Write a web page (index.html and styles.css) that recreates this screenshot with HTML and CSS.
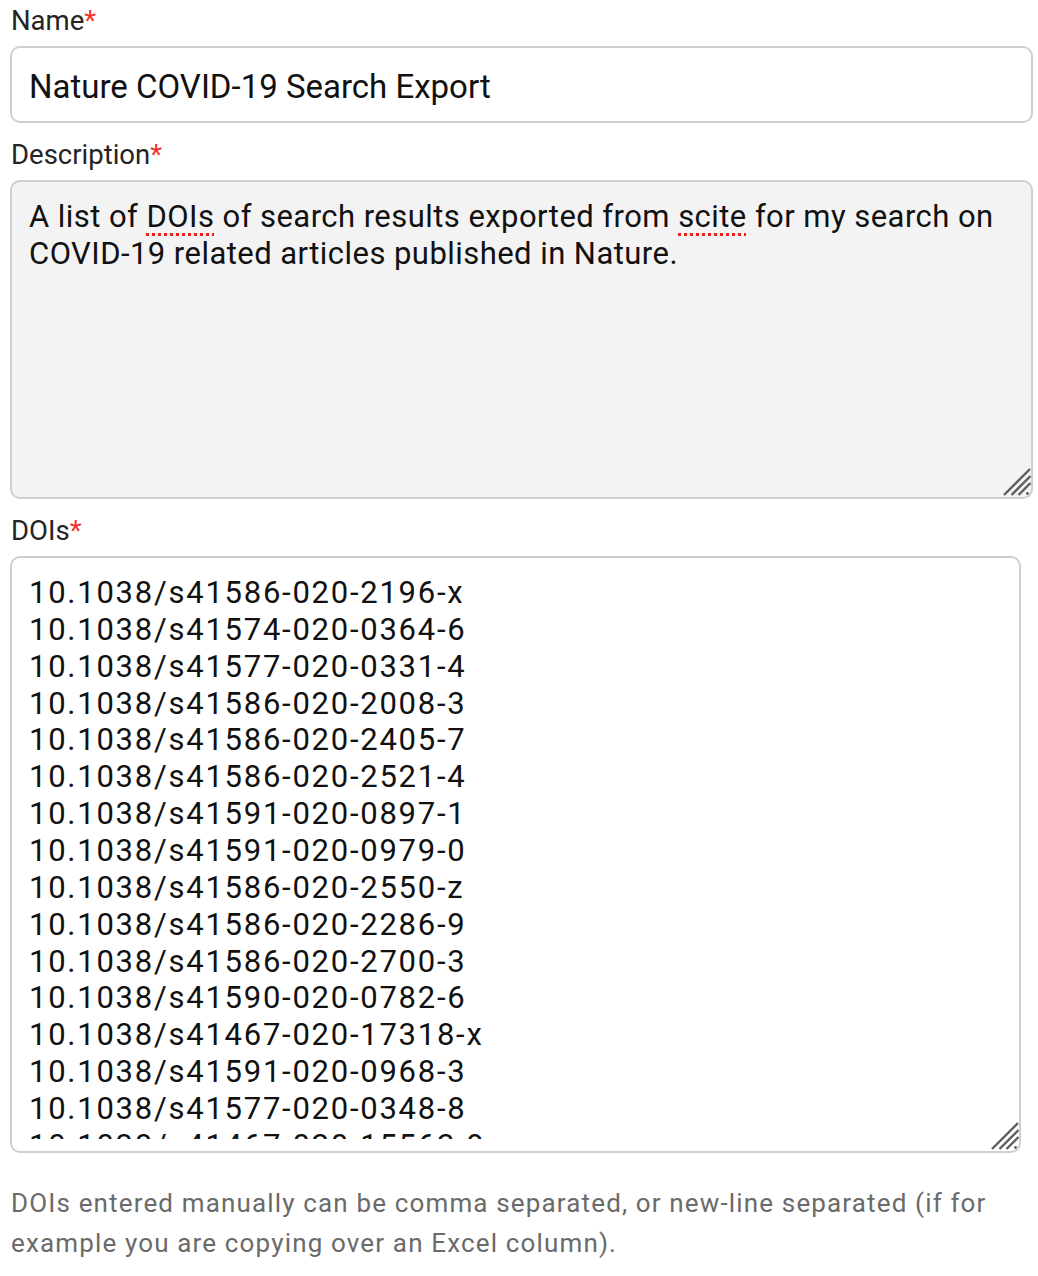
FILE: index.html
```html
<!DOCTYPE html>
<html>
<head>
<meta charset="utf-8">
<link rel="stylesheet" href="styles.css">
</head>
<body>
<form class="form">
  <div class="field">
    <label class="label">Name<span class="req">*</span></label>
    <input class="input" type="text" value="Nature COVID-19 Search Export" spellcheck="false">
  </div>
  <div class="field">
    <label class="label">Description<span class="req">*</span></label>
    <div class="area-wrap wrap-desc">
      <div class="area area-desc">A list of <span class="typo">DOIs</span> of search results exported from <span class="typo">scite</span> for my search on COVID-19 related articles published in Nature.</div>
      <svg class="grip" width="30" height="30" viewBox="0 0 30 30" aria-hidden="true">
        <path d="M28 1 L2 27 M28.5 8 L9.5 27 M28.5 15 L16.5 27" stroke="#5e5e5e" stroke-width="2.4" stroke-linecap="butt" fill="none"/>
        <circle cx="25.5" cy="25.5" r="1.4" fill="#5e5e5e"/>
      </svg>
    </div>
  </div>
  <div class="field">
    <label class="label">DOIs<span class="req">*</span></label>
    <div class="area-wrap wrap-dois">
      <textarea class="area-dois" spellcheck="false">10.1038/s41586-020-2196-x
10.1038/s41574-020-0364-6
10.1038/s41577-020-0331-4
10.1038/s41586-020-2008-3
10.1038/s41586-020-2405-7
10.1038/s41586-020-2521-4
10.1038/s41591-020-0897-1
10.1038/s41591-020-0979-0
10.1038/s41586-020-2550-z
10.1038/s41586-020-2286-9
10.1038/s41586-020-2700-3
10.1038/s41590-020-0782-6
10.1038/s41467-020-17318-x
10.1038/s41591-020-0968-3
10.1038/s41577-020-0348-8
10.1038/s41467-020-15562-9
10.1038/s41586-020-2012-7</textarea>
      <svg class="grip" width="30" height="30" viewBox="0 0 30 30" aria-hidden="true">
        <path d="M28 1 L2 27 M28.5 8 L9.5 27 M28.5 15 L16.5 27" stroke="#5e5e5e" stroke-width="2.4" stroke-linecap="butt" fill="none"/>
        <circle cx="25.5" cy="25.5" r="1.4" fill="#5e5e5e"/>
      </svg>
    </div>
  </div>
  <p class="help">DOIs entered manually can be comma separated, or new-line separated (if for example you are copying over an Excel column).</p>
</form>
</body>
</html>
```

FILE: styles.css
```css
html, body {
  margin: 0;
  padding: 0;
  background: #ffffff;
}
body {
  font-family: Roboto, "Noto Sans", sans-serif;
  color: #161616;
}
.form {
  width: 1023px;
  padding: 0 5px 0 10px;
  display: flex;
  flex-direction: column;
}
.field {
  display: flex;
  flex-direction: column;
}
.label {
  font-size: 27.5px;
  line-height: 38px;
  color: #242424;
  margin: 0 0 6px 0;
  padding: 2px 0 0 1px;
}
.field + .field .label {
  margin-top: 11px;
}
.req {
  color: #f0322b;
}
.input {
  box-sizing: border-box;
  width: 1023px;
  height: 77px;
  margin: 0;
  border: 2px solid #cfcfcf;
  border-radius: 10px;
  padding: 4px 17px 0;
  font-family: Roboto, "Noto Sans", sans-serif;
  font-size: 33px;
  color: #111111;
  background: #ffffff;
  outline: none;
}
.area-wrap {
  position: relative;
  box-sizing: border-box;
  border: 2px solid #cfcfcf;
  border-radius: 10px;
}
.wrap-desc {
  width: 1023px;
  height: 319px;
  background: #f3f3f3;
}
.wrap-dois {
  width: 1011px;
  height: 597px;
  padding-bottom: 12px;
  background: #ffffff;
}
.area {
  box-sizing: border-box;
  height: 100%;
  padding: 17px;
  font-size: 31px;
  line-height: 36.86px;
  color: #111111;
  letter-spacing: 0.45px;
  overflow: hidden;
}
.area-dois {
  box-sizing: border-box;
  display: block;
  width: 100%;
  height: 100%;
  margin: 0;
  border: none;
  border-radius: 10px 10px 0 0;
  padding: 17px 17px 0;
  font-family: Roboto, "Noto Sans", sans-serif;
  font-size: 31px;
  line-height: 36.86px;
  letter-spacing: 1.75px;
  color: #111111;
  background: transparent;
  resize: none;
  overflow: hidden;
  outline: none;
}
.grip {
  position: absolute;
  right: -1px;
  bottom: -1px;
  pointer-events: none;
}
.typo {
  text-decoration: underline dotted #e8201a;
  text-decoration-thickness: 3px;
  text-underline-offset: 6px;
}
.help {
  margin: 30px 0 0 1px;
  font-size: 26px;
  line-height: 40px;
  letter-spacing: 1.15px;
  color: #6a6a6a;
}
```
